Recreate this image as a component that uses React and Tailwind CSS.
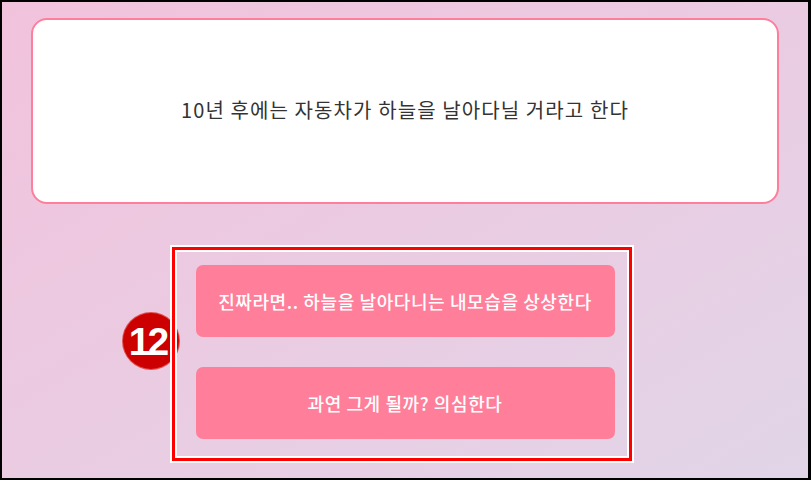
import React from 'react'

const choices = [
  '진짜라면.. 하늘을 날아다니는 내모습을 상상한다',
  '과연 그게 될까? 의심한다',
]

const App = () => {
  return (
    <div className="w-[811px] h-[480px] border-l-2 border-t-2 border-b-2 border-r-[3px] border-black bg-linear-to-br from-[#f2c2dc] to-[#e1d5e8] overflow-hidden" style={{ fontFamily: '"Noto Sans CJK KR", "Noto Sans", sans-serif' }}>
      <div className="px-[29px] pt-[16px]">
        {/* question card */}
        <div className="h-[186px] rounded-[16px] border-2 border-[#ff7e9b] bg-white flex items-center justify-center">
          <p className="text-[20px] tracking-[1.1px] text-[#333333] -mt-[2px]">10년 후에는 자동차가 하늘을 날아다닐 거라고 한다</p>
        </div>

        {/* answers */}
        <div className="relative w-[419px] mx-auto mt-[61px] flex flex-col gap-[30px]">
          {choices.map((c) => (
            <button key={c} className="h-[72px] w-full rounded-[7px] bg-[#ff7f9b] text-white text-[18px] tracking-[0.6px] font-medium flex items-center justify-center">
              {c}
            </button>
          ))}

          {/* annotation badge + box */}
          <div className="absolute left-[-73px] top-[48px] w-[56px] h-[56px] rounded-full bg-[#cc0000] flex items-center justify-center shadow-[0_0_0_1px_#e05050]">
            <span className="text-white font-bold text-[39px] leading-none tracking-[-3px] pr-[6px]" style={{ fontFamily: '"Liberation Sans", Arial, sans-serif' }}>12</span>
          </div>
          <div className="absolute left-[-24px] top-[-18px] w-[460px] h-[214px] border-[3px] border-[#ff0000] shadow-[0_0_0_2px_#ffffff,inset_0_0_0_2px_#ffffff] pointer-events-none" />
        </div>
      </div>
    </div>
  )
}

export default App
